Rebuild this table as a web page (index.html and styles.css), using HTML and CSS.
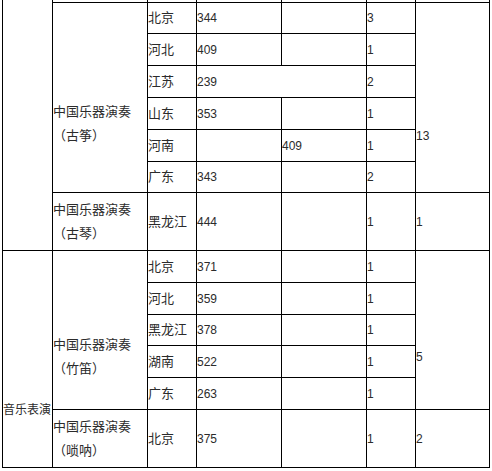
FILE: index.html
```html
<!DOCTYPE html>
<html lang="zh-CN">
<head>
<meta charset="utf-8">
<title>音乐表演</title>
<link rel="stylesheet" href="styles.css">
</head>
<body>
<table class="grid">
  <colgroup>
    <col class="w-cat"><col class="w-item"><col class="w-prov"><col class="w-num"><col class="w-num"><col class="w-cnt"><col class="w-sum">
  </colgroup>
  <tbody>
    <tr class="h30">
      <td rowspan="8" class="zh cat"></td>
      <td></td><td></td><td></td><td></td><td></td><td></td>
    </tr>
    <tr class="h31">
      <td rowspan="6" class="zh item shift26">中国乐器演奏<br>（古筝）</td>
      <td class="zh">北京</td><td>344</td><td></td><td>3</td>
      <td rowspan="6" class="shift38">13</td>
    </tr>
    <tr class="h32"><td class="zh">河北</td><td>409</td><td></td><td>1</td></tr>
    <tr class="h32"><td class="zh">江苏</td><td colspan="2">239</td><td>2</td></tr>
    <tr class="h32"><td class="zh">山东</td><td>353</td><td></td><td>1</td></tr>
    <tr class="h32"><td class="zh">河南</td><td></td><td>409</td><td>1</td></tr>
    <tr class="h31"><td class="zh">广东</td><td>343</td><td></td><td>2</td></tr>
    <tr class="h58">
      <td class="zh item">中国乐器演奏<br>（古琴）</td>
      <td class="zh">黑龙江</td><td>444</td><td></td><td>1</td><td>1</td>
    </tr>
    <tr class="h32">
      <td rowspan="6" class="zh cat shift51">音乐表演</td>
      <td rowspan="5" class="zh item shift26">中国乐器演奏<br>（竹笛）</td>
      <td class="zh">北京</td><td>371</td><td></td><td>1</td>
      <td rowspan="5" class="shift26">5</td>
    </tr>
    <tr class="h32"><td class="zh">河北</td><td>359</td><td></td><td>1</td></tr>
    <tr class="h31"><td class="zh">黑龙江</td><td>378</td><td></td><td>1</td></tr>
    <tr class="h32"><td class="zh">湖南</td><td>522</td><td></td><td>1</td></tr>
    <tr class="h32"><td class="zh">广东</td><td>263</td><td></td><td>1</td></tr>
    <tr class="h58">
      <td class="zh item">中国乐器演奏<br>（唢呐）</td>
      <td class="zh">北京</td><td>375</td><td></td><td>1</td><td>2</td>
    </tr>
  </tbody>
</table>
</body>
</html>
```

FILE: styles.css
```css
html, body {
  margin: 0;
  padding: 0;
  background: #ffffff;
}

.grid {
  margin: -28px 0 0 2px;
  border-collapse: collapse;
  table-layout: fixed;
  width: 487px;
  font-family: "Liberation Sans", "Noto Sans CJK SC", sans-serif;
  font-size: 12px;
  color: #2b2b2b;
}

.w-cat { width: 50px; }
.w-item { width: 95px; }
.w-prov { width: 49px; }
.w-num { width: 85px; }
.w-cnt { width: 49px; }
.w-sum { width: 74px; }

.grid td {
  border: 1px solid #000000;
  padding: 0;
  line-height: 24px;
  vertical-align: middle;
  text-align: left;
  white-space: nowrap;
  overflow: hidden;
}

.h30 { height: 30px; }
.h31 { height: 31px; }
.h32 { height: 32px; }
.h58 { height: 58px; }

.grid td.zh {
  font-size: 13px;
}

.grid td.cat {
  font-size: 12px;
}

.grid td.shift26 { padding-top: 53px; }
.grid td.shift38 { padding-top: 76px; }
.grid td.shift51 { padding-top: 102px; }
```
